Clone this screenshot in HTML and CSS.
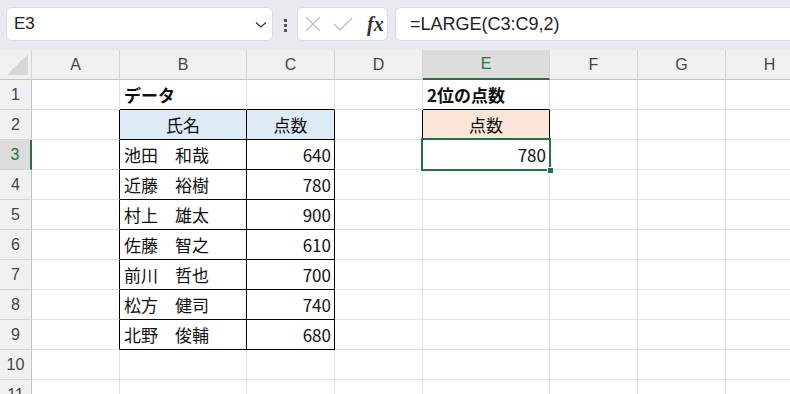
FILE: index.html
```html
<!DOCTYPE html>
<html lang="ja">
<head>
    <meta charset="UTF-8">
    <meta name="viewport" content="width=device-width, initial-scale=1.0">
    <title>LARGE</title>
    <link rel="stylesheet" href="styles.css">
</head>
<body>
    <div class="app">
        <div class="toolbar">
            <div class="name-box">
                <span>E3</span>
                <svg class="chevron" width="12" height="8" viewBox="0 0 12 8"><path d="M1 1.5 L6 6 L11 1.5" fill="none" stroke="#333" stroke-width="1.3"/></svg>
            </div>
            <div class="grip"><i></i><i></i><i></i></div>
            <div class="fx-buttons">
                <svg width="16" height="16" viewBox="0 0 16 16"><path d="M1 1 L15 15 M15 1 L1 15" stroke="#bdbdbd" stroke-width="1.4"/></svg>
                <svg width="20" height="14" viewBox="0 0 20 14"><path d="M1 7 L7 13 L19 1" fill="none" stroke="#bdbdbd" stroke-width="1.4"/></svg>
                <span class="fx">fx</span>
            </div>
            <div class="formula">=LARGE(C3:C9,2)</div>
        </div>

        <div class="sheet">
            <div class="row head">
                <div class="corner"><span class="tri"></span></div>
                <div class="col">A</div>
                <div class="col">B</div>
                <div class="col">C</div>
                <div class="col">D</div>
                <div class="col active">E</div>
                <div class="col">F</div>
                <div class="col">G</div>
                <div class="col">H</div>
            </div>
            <div class="row">
                <div class="rh">1</div>
                <div class="c"></div>
                <div class="c bold bb">データ</div>
                <div class="c bb"></div>
                <div class="c"></div>
                <div class="c bold bb">2位の点数</div>
                <div class="c"></div>
                <div class="c"></div>
                <div class="c"></div>
            </div>
            <div class="row">
                <div class="rh">2</div>
                <div class="c br"></div>
                <div class="c t center blue">氏名</div>
                <div class="c t center blue">点数</div>
                <div class="c br"></div>
                <div class="c t center peach">点数</div>
                <div class="c"></div>
                <div class="c"></div>
                <div class="c"></div>
            </div>
            <div class="row">
                <div class="rh active">3</div>
                <div class="c br"></div>
                <div class="c t">池田　和哉</div>
                <div class="c t num">640</div>
                <div class="c"></div>
                <div class="c num selected">780<span class="sel"><span class="handle"></span></span></div>
                <div class="c"></div>
                <div class="c"></div>
                <div class="c"></div>
            </div>
            <div class="row">
                <div class="rh">4</div>
                <div class="c br"></div>
                <div class="c t">近藤　裕樹</div>
                <div class="c t num">780</div>
                <div class="c"></div>
                <div class="c"></div>
                <div class="c"></div>
                <div class="c"></div>
                <div class="c"></div>
            </div>
            <div class="row">
                <div class="rh">5</div>
                <div class="c br"></div>
                <div class="c t">村上　雄太</div>
                <div class="c t num">900</div>
                <div class="c"></div>
                <div class="c"></div>
                <div class="c"></div>
                <div class="c"></div>
                <div class="c"></div>
            </div>
            <div class="row">
                <div class="rh">6</div>
                <div class="c br"></div>
                <div class="c t">佐藤　智之</div>
                <div class="c t num">610</div>
                <div class="c"></div>
                <div class="c"></div>
                <div class="c"></div>
                <div class="c"></div>
                <div class="c"></div>
            </div>
            <div class="row">
                <div class="rh">7</div>
                <div class="c br"></div>
                <div class="c t">前川　哲也</div>
                <div class="c t num">700</div>
                <div class="c"></div>
                <div class="c"></div>
                <div class="c"></div>
                <div class="c"></div>
                <div class="c"></div>
            </div>
            <div class="row">
                <div class="rh">8</div>
                <div class="c br"></div>
                <div class="c t">松方　健司</div>
                <div class="c t num">740</div>
                <div class="c"></div>
                <div class="c"></div>
                <div class="c"></div>
                <div class="c"></div>
                <div class="c"></div>
            </div>
            <div class="row">
                <div class="rh">9</div>
                <div class="c br"></div>
                <div class="c t">北野　俊輔</div>
                <div class="c t num">680</div>
                <div class="c"></div>
                <div class="c"></div>
                <div class="c"></div>
                <div class="c"></div>
                <div class="c"></div>
            </div>
            <div class="row">
                <div class="rh">10</div>
                <div class="c"></div>
                <div class="c"></div>
                <div class="c"></div>
                <div class="c"></div>
                <div class="c"></div>
                <div class="c"></div>
                <div class="c"></div>
                <div class="c"></div>
            </div>
            <div class="row">
                <div class="rh">11</div>
                <div class="c"></div>
                <div class="c"></div>
                <div class="c"></div>
                <div class="c"></div>
                <div class="c"></div>
                <div class="c"></div>
                <div class="c"></div>
                <div class="c"></div>
            </div>
        </div>
    </div>
</body>
</html>
```

FILE: styles.css
```css
body {
    margin: 0;
    background-color: #fff;
    font-family: "Liberation Sans", "Noto Sans CJK JP", sans-serif;
    color: #222;
}
.app {
    width: 790px;
    height: 394px;
    overflow: hidden;
}

/* formula bar */
.toolbar {
    display: flex;
    align-items: center;
    height: 50px;
    padding-left: 6px;
    box-sizing: border-box;
    background-color: #e8eaef;
    white-space: nowrap;
}
.toolbar > * {
    flex: none;
}
.name-box {
    display: flex;
    align-items: center;
    justify-content: space-between;
    width: 267px;
    height: 34px;
    margin-top: -2px;
    padding: 0 5px 0 7px;
    box-sizing: border-box;
    background-color: #fff;
    border: 1px solid #dcdde2;
    border-radius: 6px;
    font-size: 17px;
    color: #222;
}
.chevron {
    margin-top: 2px;
}
.grip {
    display: flex;
    flex-direction: column;
    gap: 2px;
    margin: 0 10px 0 11px;
}
.grip i {
    display: block;
    width: 3px;
    height: 3px;
    background-color: #555;
}
.fx-buttons {
    display: flex;
    align-items: center;
    width: 91px;
    height: 34px;
    margin-top: -2px;
    padding-left: 7px;
    box-sizing: border-box;
    background-color: #fff;
    border: 1px solid #dcdde2;
    border-radius: 6px;
    gap: 12px;
}
.fx {
    font-family: "Liberation Serif", serif;
    font-style: italic;
    font-weight: bold;
    font-size: 20px;
    color: #333;
    margin-left: 2px;
}
.formula {
    width: 420px;
    height: 34px;
    margin: -2px 0 0 7px;
    padding-left: 14px;
    box-sizing: border-box;
    display: flex;
    align-items: center;
    background-color: #fff;
    border: 1px solid #dcdde2;
    border-radius: 6px;
    font-size: 18px;
    color: #222;
}

/* grid */
.row {
    display: grid;
    grid-template-columns: 32px 88px 127px 88px 88px 127px 88px 88px 88px;
    height: 30px;
}
.row > div {
    box-sizing: border-box;
    border-right: 1px solid #e1e1e1;
    border-bottom: 1px solid #e1e1e1;
    display: flex;
    align-items: center;
    overflow: visible;
    white-space: nowrap;
}
.head > div {
    background-color: #f0f0f0;
    border-right-color: #d4d4d4;
    border-bottom-color: #c4c4c4;
    justify-content: center;
    font-size: 16px;
    color: #444;
}
.corner {
    position: relative;
}
.tri {
    position: absolute;
    right: 3px;
    bottom: 4px;
    width: 0;
    height: 0;
    border-left: 21px solid transparent;
    border-bottom: 21px solid #d7d7d7;
}
.head > .col.active {
    background-color: #dcdcdc;
    color: #217346;
    border-bottom: 2px solid #217346;
}
.row > .rh {
    justify-content: center;
    background-color: #f0f0f0;
    border-right-color: #c4c4c4;
    border-bottom-color: #d4d4d4;
    font-size: 16px;
    color: #444;
}
.row > .rh.active {
    background-color: #dcdcdc;
    color: #217346;
    border-right: 2px solid #217346;
}
.c {
    padding: 0 4px;
    font-family: "Noto Sans CJK JP", sans-serif;
    font-size: 17px;
    color: #111;
}
.bold {
    font-weight: bold;
}
.num {
    justify-content: flex-end;
    padding-right: 3px;
}
.center {
    justify-content: center;
}
.row > .bb {
    border-bottom-color: #000;
}
.row > .br {
    border-right-color: #000;
}
.row > .t {
    border-right-color: #000;
    border-bottom-color: #000;
}
.blue {
    background-color: #ddebf7;
}
.peach {
    background-color: #fce4d6;
}
.selected {
    position: relative;
}
.sel {
    position: absolute;
    top: -2px;
    left: -2px;
    right: -2px;
    bottom: -2px;
    border: 2px solid #217346;
}
.handle {
    position: absolute;
    right: -5px;
    bottom: -5px;
    width: 5px;
    height: 5px;
    background-color: #217346;
    border: 1px solid #fff;
}
```
